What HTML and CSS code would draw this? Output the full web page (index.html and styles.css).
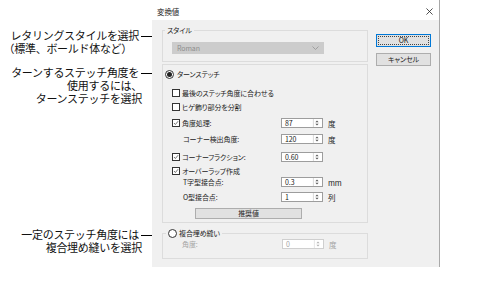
FILE: index.html
```html
<!DOCTYPE html>
<html lang="ja">
<head>
<meta charset="utf-8">
<title>変換値</title>
<link rel="stylesheet" href="styles.css">
</head>
<body>
<div class="page">
  <div class="notes">
    <div class="note n1">
      <div class="line first"><span>レタリングスタイルを選択</span><svg class="arrow" viewBox="0 0 19 7"><line x1="0" y1="3.5" x2="14" y2="3.5"/><polygon points="12,1 19,3.5 12,6"/></svg></div>
      <div class="line l2">（標準、ボールド体など）</div>
    </div>
    <div class="note n2">
      <div class="line first"><span>ターンするステッチ角度を</span><svg class="arrow" viewBox="0 0 19 7"><line x1="0" y1="3.5" x2="14" y2="3.5"/><polygon points="12,1 19,3.5 12,6"/></svg></div>
      <div class="line">使用するには、</div>
      <div class="line">ターンステッチを選択</div>
    </div>
    <div class="note n3">
      <div class="line first"><span>一定のステッチ角度には</span><svg class="arrow" viewBox="0 0 19 7"><line x1="0" y1="3.5" x2="14" y2="3.5"/><polygon points="12,1 19,3.5 12,6"/></svg></div>
      <div class="line">複合埋め縫いを選択</div>
    </div>
  </div>

  <div class="dialog">
    <div class="titlebar">
      <span class="title">変換値</span>
      <svg class="close" viewBox="0 0 8 8"><line x1="0.5" y1="0.5" x2="7.5" y2="7.5"/><line x1="7.5" y1="0.5" x2="0.5" y2="7.5"/></svg>
    </div>
    <div class="body">
      <div class="main">
        <fieldset class="grp style-grp">
          <legend>スタイル</legend>
          <div class="combo"><span>Roman</span><svg class="chev" viewBox="0 0 7 4"><polyline points="0.5,0.5 3.5,3.5 6.5,0.5"/></svg></div>
        </fieldset>

        <div class="grp turn-grp">
          <div class="row"><div class="lead radio-lead"><span class="radio on"></span><span class="lbl">ターンステッチ</span></div></div>
          <div class="row"><div class="lead chk-lead"><span class="chk"></span><span class="lbl">最後のステッチ角度に合わせる</span></div></div>
          <div class="row"><div class="lead chk-lead"><span class="chk"></span><span class="lbl">ヒゲ飾り部分を分割</span></div></div>
          <div class="row"><div class="lead chk-lead"><span class="chk"><svg viewBox="0 0 8 8"><polyline points="1.3,4 3.2,6 6.8,1.6"/></svg></span><span class="lbl">角度処理:</span></div><div class="spin"><span class="val">87</span><svg class="arr" viewBox="0 0 10 10"><line x1="0.5" y1="0" x2="0.5" y2="10"/><polygon points="5,1.8 3,4 7,4"/><polygon points="3,6 7,6 5,8.2"/></svg></div><span class="unit">度</span></div>
          <div class="row"><div class="lead ind-lead"><span class="lbl">コーナー検出角度:</span></div><div class="spin"><span class="val">120</span><svg class="arr" viewBox="0 0 10 10"><line x1="0.5" y1="0" x2="0.5" y2="10"/><polygon points="5,1.8 3,4 7,4"/><polygon points="3,6 7,6 5,8.2"/></svg></div><span class="unit">度</span></div>
          <div class="row"><div class="lead chk-lead"><span class="chk"><svg viewBox="0 0 8 8"><polyline points="1.3,4 3.2,6 6.8,1.6"/></svg></span><span class="lbl">コーナーフラクション:</span></div><div class="spin"><span class="val">0.60</span><svg class="arr" viewBox="0 0 10 10"><line x1="0.5" y1="0" x2="0.5" y2="10"/><polygon points="5,1.8 3,4 7,4"/><polygon points="3,6 7,6 5,8.2"/></svg></div></div>
          <div class="row"><div class="lead chk-lead"><span class="chk"><svg viewBox="0 0 8 8"><polyline points="1.3,4 3.2,6 6.8,1.6"/></svg></span><span class="lbl">オーバーラップ作成</span></div></div>
          <div class="row"><div class="lead ind-lead"><span class="lbl">T字型接合点:</span></div><div class="spin"><span class="val">0.3</span><svg class="arr" viewBox="0 0 10 10"><line x1="0.5" y1="0" x2="0.5" y2="10"/><polygon points="5,1.8 3,4 7,4"/><polygon points="3,6 7,6 5,8.2"/></svg></div><span class="unit">mm</span></div>
          <div class="row"><div class="lead ind-lead"><span class="lbl">O型接合点:</span></div><div class="spin"><span class="val">1</span><svg class="arr" viewBox="0 0 10 10"><line x1="0.5" y1="0" x2="0.5" y2="10"/><polygon points="5,1.8 3,4 7,4"/><polygon points="3,6 7,6 5,8.2"/></svg></div><span class="unit">列</span></div>
          <div class="row btn-row"><div class="btn rec">推奨値</div></div>
        </div>

        <fieldset class="grp fill-grp">
          <legend><span class="radio"></span><span class="lbl">複合埋め縫い</span></legend>
          <div class="row dis"><div class="lead ang-lead"><span class="lbl">角度:</span></div><div class="spin"><span class="val">0</span><svg class="arr" viewBox="0 0 10 10"><line x1="0.5" y1="0" x2="0.5" y2="10"/><polygon points="5,1.8 3,4 7,4"/><polygon points="3,6 7,6 5,8.2"/></svg></div><span class="unit">度</span></div>
        </fieldset>
      </div>

      <div class="buttons">
        <div class="btn ok"><span>OK</span></div>
        <div class="btn cancel">キャンセル</div>
      </div>
    </div>
  </div>
</div>
</body>
</html>
```

FILE: styles.css
```css
* { box-sizing: border-box; }
html, body { margin: 0; padding: 0; background: #fff; }
.page {
  display: flex;
  width: 485px;
  height: 285px;
  overflow: hidden;
}

/* annotations */
.notes {
  width: 152px;
  flex: none;
  font-family: "Liberation Sans", "Noto Sans CJK JP", sans-serif;
  font-size: 11px;
  line-height: 13px;
  letter-spacing: -0.3px;
  color: #111;
  text-align: right;
}
.note { display: flex; flex-direction: column; }
.n1 { margin-top: 30px; }
.n2 { margin-top: 11px; }
.n3 { margin-top: 123px; }
.line { padding-right: 10px; white-space: nowrap; height: 13px; }
.line.first {
  padding-right: 0;
  display: flex;
  justify-content: flex-end;
  align-items: center;
}
.line.l2 { padding-right: 20px; }
.arrow {
  width: 19px;
  height: 7px;
  flex: none;
  margin-left: 2px;
  margin-right: -8px;
}
.arrow line { stroke: #000; stroke-width: 1; }
.arrow polygon { fill: #000; }

/* dialog */
.dialog {
  width: 288px;
  height: 267px;
  flex: none;
  display: flex;
  flex-direction: column;
  border-right: 1px solid #a9a9a9;
  font-family: "Noto Sans CJK JP", sans-serif;
  font-size: 7px;
  line-height: 9px;
  font-feature-settings: "palt";
  letter-spacing: -0.1px;
  color: #222;
}
.titlebar {
  height: 20px;
  flex: none;
  display: flex;
  align-items: center;
  justify-content: space-between;
  padding: 3px 6px 0 5px;
  background: #fff;
}
.title { font-size: 7.5px; }
.close { width: 7px; height: 7px; }
.close line { stroke: #222; stroke-width: 0.9; }

.body {
  flex: 1;
  display: flex;
  gap: 8px;
  padding: 5px 0 0 10px;
  background: #f0f0f0;
}
.main { width: 206px; flex: none; display: flex; flex-direction: column; }

.grp {
  margin: 0;
  border: 1px solid #dcdcdc;
  min-width: 0;
}
fieldset.grp legend {
  padding: 0 2px;
  line-height: 10px;
}

.style-grp { padding: 0 0 7px 9px; }
.style-grp legend { margin-left: -7px; }
.combo {
  margin-top: 7px;
  width: 152px;
  height: 12px;
  background: #cccccc;
  border: 1px solid #cccccc;
  color: #8d8d8d;
  display: flex;
  align-items: center;
  justify-content: space-between;
  padding: 0 4px 0 4px;
}
.chev { width: 7px; height: 4px; }
.chev polyline { fill: none; stroke: #9a9a9a; stroke-width: 0.9; }

.turn-grp {
  margin-top: 2px;
  padding: 4px 0 3px 0;
  display: grid;
  grid-template-rows: 19px 14px 16px 16px 18px 14px 11px 15px 16px 11px;
}
.row {
  display: grid;
  grid-template-columns: 118px 42px auto;
  align-items: center;
  align-self: start;
  height: 10px;
}
.row.btn-row { height: 11px; display: block; }
.lead { display: flex; align-items: center; white-space: nowrap; }
.radio-lead { padding-left: 2px; }
.chk-lead { padding-left: 9px; }
.ind-lead { padding-left: 20px; }
.chk-lead .lbl { margin-left: 2px; }
.radio-lead .lbl { margin-left: 3px; }

.radio {
  width: 9px;
  height: 9px;
  border: 1px solid #333;
  border-radius: 50%;
  background: #fff;
  display: flex;
  align-items: center;
  justify-content: center;
  flex: none;
}
.radio.on::before {
  content: "";
  width: 5px;
  height: 5px;
  border-radius: 50%;
  background: #222;
}
.chk {
  width: 8px;
  height: 8px;
  border: 1px solid #333;
  background: #fff;
  flex: none;
  display: flex;
}
.chk svg { width: 100%; height: 100%; }
.chk polyline { fill: none; stroke: #333; stroke-width: 0.9; }

.spin {
  width: 42px;
  height: 10px;
  border: 1px solid #9d9d9d;
  background: #fff;
  display: flex;
  align-items: center;
  justify-content: space-between;
  padding-left: 3px;
}
.val { line-height: 8px; }
.arr { width: 10px; height: 8px; flex: none; }
.arr line { stroke: #d0d0d0; stroke-width: 1; }
.arr polygon { fill: #555; }
.unit { margin-left: 5px; font-size: 7.5px; }

.btn {
  border: 1px solid #adadad;
  background: #e1e1e1;
  display: flex;
  align-items: center;
  justify-content: center;
}
.rec { margin-left: 32px; width: 107px; height: 11px; }

.fill-grp {
  margin-top: 5px;
  padding: 0 0 9px 0;
}
.fill-grp legend {
  margin-left: 3px;
  display: flex;
  align-items: center;
}
.fill-grp legend .lbl { margin-left: 2px; }
.fill-grp .radio { border-color: #333; }
.fill-grp .row { margin-top: 1px; grid-template-columns: 119px 42px auto; }
.ang-lead { padding-left: 19px; }
.dis { color: #a3a3a3; }
.dis .spin { border-color: #cfcfcf; }
.dis .arr polygon { fill: #b0b0b0; }
.dis .arr line { stroke: #e0e0e0; }

.buttons {
  width: 55px;
  flex: none;
  display: flex;
  flex-direction: column;
  gap: 6px;
  padding-top: 9px;
}
.buttons .btn { height: 13px; }
.ok {
  border-color: #0078d7;
  padding: 1px;
  align-items: stretch;
}
.ok span {
  flex: 1;
  border: 1px dotted #444;
  display: flex;
  align-items: center;
  justify-content: center;
}
```
